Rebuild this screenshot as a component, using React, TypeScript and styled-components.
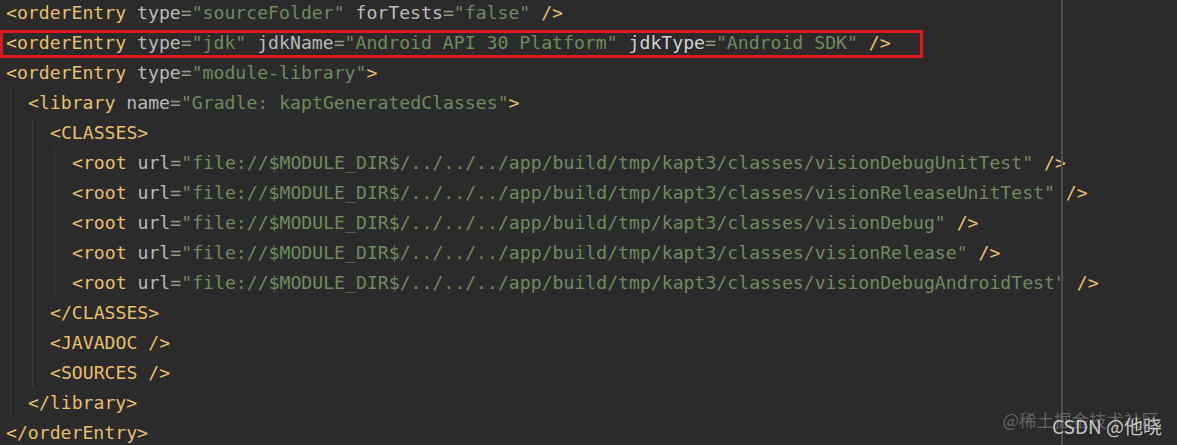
import React from "react";
import styled, { createGlobalStyle } from "styled-components";

const Global = createGlobalStyle`
  html, body { margin: 0; padding: 0; background: #2b2b2b; }
  #root { width: 1177px; height: 445px; overflow: hidden; }
`;

const Editor = styled.div`
  position: relative;
  width: 1177px;
  height: 445px;
  background: #2b2b2b;
  overflow: hidden;
  font-family: "DejaVu Sans Mono", "Liberation Mono", monospace;
  font-size: 18.15px;
  color: #bababa;
`;

const Code = styled.div`
  display: flex;
  flex-direction: column;
  padding-left: 6px;
  margin-top: -2px;
`;

const Row = styled.div<{ $boxed?: boolean }>`
  height: 30px;
  line-height: 30px;
  white-space: pre;
  box-sizing: border-box;
  ${(p) =>
    p.$boxed
      ? `
    width: 923px;
    margin-left: -6px;
    margin-top: 2px;
    padding-left: 3px;
    padding-bottom: 2px;
    border: 3px solid #e3161b;
    line-height: 20px;
    height: 28px;
  `
      : ""}
`;

const Block = styled.div<{ $guide: string }>`
  display: flex;
  flex-direction: column;
  margin-left: 4px;
  padding-left: 17px;
  border-left: 1px solid ${(p) => p.$guide};
`;

const Tag = styled.span`
  color: #e8bf6a;
`;
const Attr = styled.span<{ $bright?: boolean }>`
  color: ${(p) => (p.$bright ? "#d2d2d2" : "#bababa")};
`;
const Val = styled.span`
  color: #6f8a5e;
`;
const Eq = styled.span`
  color: #8f9a88;
`;

const Margin = styled.div`
  position: absolute;
  top: 0;
  bottom: 0;
  left: 1061px;
  width: 2px;
  background: #4d4d4d;
`;

const Watermark = styled.div`
  position: absolute;
  right: 15px;
  bottom: 9px;
  display: flex;
  flex-direction: column;
  align-items: flex-end;
  font-family: "Noto Sans CJK SC", "Noto Sans", sans-serif;
`;

const Juejin = styled.div`
  font-size: 17.5px;
  line-height: 18px;
  color: rgba(150, 150, 150, 0.55);
  margin-right: 3px;
`;

const Csdn = styled.div`
  font-size: 19px;
  line-height: 20px;
  margin-top: -13px;
  margin-right: 0;
  color: rgba(235, 235, 235, 0.85);
  text-shadow: 0 0 1px rgba(0, 0, 0, 0.6);
`;

type AttrDef = { name: string; value: string; bright?: boolean };

const Attrs: React.FC<{ list: AttrDef[] }> = ({ list }) => (
  <>
    {list.map((a) => (
      <React.Fragment key={a.name}>
        {" "}
        <Attr $bright={a.bright}>{a.name}</Attr>
        <Eq>=</Eq>
        <Val>"{a.value}"</Val>
      </React.Fragment>
    ))}
  </>
);

const roots = [
  "visionDebugUnitTest",
  "visionReleaseUnitTest",
  "visionDebug",
  "visionRelease",
  "visionDebugAndroidTest",
];

export default function App() {
  return (
    <>
      <Global />
      <Editor>
        <Code>
          <Row>
            <Tag>&lt;orderEntry</Tag>
            <Attrs
              list={[
                { name: "type", value: "sourceFolder" },
                { name: "forTests", value: "false" },
              ]}
            />
            <Tag> /&gt;</Tag>
          </Row>
          <Row $boxed>
            <Tag>&lt;orderEntry</Tag>
            <Attrs
              list={[
                { name: "type", value: "jdk" },
                { name: "jdkName", value: "Android API 30 Platform" },
                { name: "jdkType", value: "Android SDK", bright: true },
              ]}
            />
            <Tag> /&gt;</Tag>
          </Row>
          <Row>
            <Tag>&lt;orderEntry</Tag>
            <Attrs list={[{ name: "type", value: "module-library" }]} />
            <Tag>&gt;</Tag>
          </Row>
          <Block $guide="#363636">
            <Row>
              <Tag>&lt;library</Tag>
              <Attrs list={[{ name: "name", value: "Gradle: kaptGeneratedClasses" }]} />
              <Tag>&gt;</Tag>
            </Row>
            <Block $guide="#3b3b3b">
              <Row>
                <Tag>&lt;CLASSES&gt;</Tag>
              </Row>
              <Block $guide="#3b3b3b">
                {roots.map((r) => (
                  <Row key={r}>
                    <Tag>&lt;root</Tag>
                    <Attrs
                      list={[
                        {
                          name: "url",
                          value: `file://$MODULE_DIR$/../../../app/build/tmp/kapt3/classes/${r}`,
                        },
                      ]}
                    />
                    <Tag> /&gt;</Tag>
                  </Row>
                ))}
              </Block>
              <Row>
                <Tag>&lt;/CLASSES&gt;</Tag>
              </Row>
              <Row>
                <Tag>&lt;JAVADOC /&gt;</Tag>
              </Row>
              <Row>
                <Tag>&lt;SOURCES /&gt;</Tag>
              </Row>
            </Block>
            <Row>
              <Tag>&lt;/library&gt;</Tag>
            </Row>
          </Block>
          <Row>
            <Tag>&lt;/orderEntry&gt;</Tag>
          </Row>
        </Code>
        <Margin />
        <Watermark>
          <Juejin>@稀土掘金技术社区</Juejin>
          <Csdn>CSDN @他晓</Csdn>
        </Watermark>
      </Editor>
    </>
  );
}
